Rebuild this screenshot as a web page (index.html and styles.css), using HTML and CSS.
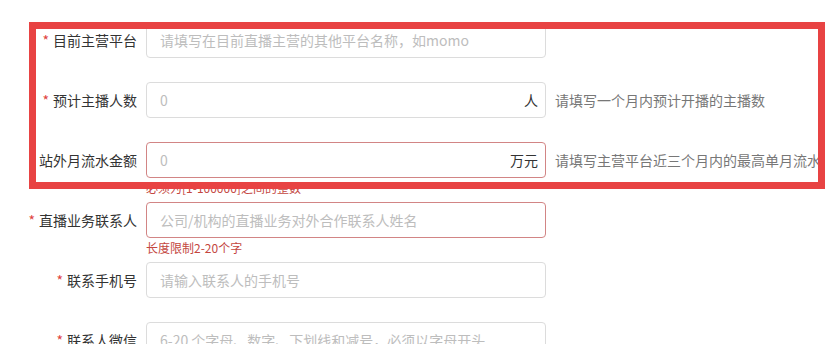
FILE: index.html
```html
<!DOCTYPE html>
<html lang="zh-CN">
<head>
  <meta charset="UTF-8">
  <title>主播信息</title>
  <link rel="stylesheet" href="styles.css">
</head>
<body>
  <div class="form">
    <div class="form-item">
      <label class="form-label"><span class="req">*</span>目前主营平台</label>
      <div class="form-control">
        <div class="input-wrap"><input type="text" placeholder="请填写在目前直播主营的其他平台名称，如momo"></div>
      </div>
    </div>

    <div class="form-item">
      <label class="form-label"><span class="req">*</span>预计主播人数</label>
      <div class="form-control">
        <div class="input-wrap"><input type="text" placeholder="0"><span class="unit">人</span></div>
      </div>
      <span class="form-tip">请填写一个月内预计开播的主播数</span>
    </div>

    <div class="form-item is-error">
      <label class="form-label">站外月流水金额</label>
      <div class="form-control">
        <div class="input-wrap"><input type="text" placeholder="0"><span class="unit">万元</span></div>
        <div class="form-error">必须为[1-100000]之间的整数</div>
      </div>
      <span class="form-tip">请填写主营平台近三个月内的最高单月流水</span>
    </div>

    <div class="form-item is-error">
      <label class="form-label"><span class="req">*</span>直播业务联系人</label>
      <div class="form-control">
        <div class="input-wrap"><input type="text" placeholder="公司/机构的直播业务对外合作联系人姓名"></div>
        <div class="form-error">长度限制2-20个字</div>
      </div>
    </div>

    <div class="form-item">
      <label class="form-label"><span class="req">*</span>联系手机号</label>
      <div class="form-control">
        <div class="input-wrap"><input type="text" placeholder="请输入联系人的手机号"></div>
      </div>
    </div>

    <div class="form-item">
      <label class="form-label"><span class="req">*</span>联系人微信</label>
      <div class="form-control">
        <div class="input-wrap"><input type="text" placeholder="6-20 个字母、数字、下划线和减号，必须以字母开头"></div>
      </div>
    </div>
  </div>

  <div class="mark"></div>
</body>
</html>
```

FILE: styles.css
```css
body {
  margin: 0;
  background: #fff;
  font-family: "Noto Sans CJK SC", "Microsoft YaHei", sans-serif;
  font-size: 14px;
  color: #333;
  overflow: hidden;
}

.form {
  padding-top: 22px;
}

.form-item {
  display: flex;
  align-items: center;
  height: 36px;
  margin-bottom: 24px;
}

.form-label {
  width: 146px;
  box-sizing: border-box;
  padding-right: 9px;
  text-align: right;
  color: #333;
  white-space: nowrap;
}

.req {
  color: #e0443e;
  margin-right: 4px;
}

.form-control {
  position: relative;
  width: 400px;
}

.input-wrap {
  display: flex;
  align-items: center;
  height: 36px;
  box-sizing: border-box;
  padding: 0 7px 0 13px;
  border: 1px solid #dcdcdc;
  border-radius: 4px;
  background: #fff;
}

.input-wrap input {
  flex: 1;
  min-width: 0;
  border: 0;
  outline: 0;
  padding: 0;
  background: transparent;
  font: inherit;
  color: #333;
}

.input-wrap input::placeholder {
  color: #bdbdbd;
}

.unit {
  color: #333;
  margin-left: 6px;
}

.form-tip {
  margin-left: 9px;
  color: #777;
  white-space: nowrap;
}

.is-error .input-wrap {
  border-color: #d28585;
}

.form-error {
  position: absolute;
  top: 100%;
  left: 0;
  padding-top: 2px;
  font-size: 12px;
  line-height: 16px;
  color: #c4473f;
}

/* marco rojo de anotacion */
.mark {
  position: absolute;
  left: 29px;
  top: 22px;
  width: 796px;
  height: 167px;
  box-sizing: border-box;
  border: 7px solid #e84343;
}
```
